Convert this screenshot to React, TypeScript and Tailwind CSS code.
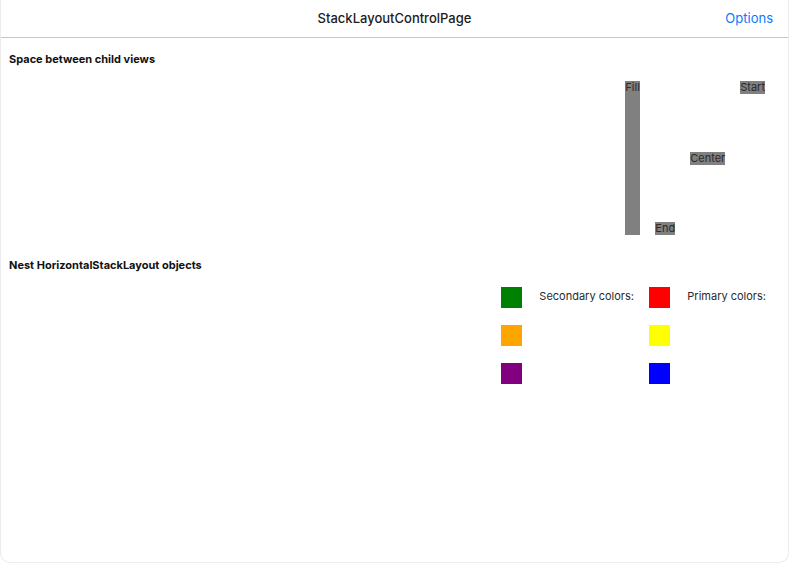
import React from 'react';

const Box: React.FC<{ label: string; className?: string }> = ({ label, className = '' }) => (
  <div className={`bg-[#808080] text-[#2a2a2a] text-[11px] leading-[13px] ${className}`}>
    {label}
  </div>
);

const Swatch: React.FC<{ color: string }> = ({ color }) => (
  <div className={`w-[21px] h-[21px] ${color}`} />
);

export default function App() {
  return (
    <div
      className="h-[563px] w-[789px] bg-white flex flex-col rounded-b-[10px] border-x border-b border-[#ececec] overflow-hidden"
      style={{ fontFamily: 'Inter, "Noto Sans", sans-serif' }}
    >
      <header className="h-[38px] shrink-0 border-b border-[#c6c6c6] flex items-center relative">
        <h1 className="absolute inset-x-0 text-center text-[13px] text-[#1c1c1c] font-medium">
          StackLayoutControlPage
        </h1>
        <a href="#" className="ml-auto mr-[15px] text-[13px] text-[#0a7aff] relative">
          Options
        </a>
      </header>

      <main className="px-[8px]">
        <h2 className="mt-[14px] text-[11px] font-bold text-[#111] leading-[14px]">
          Space between child views
        </h2>
        <div className="mt-[15px] h-[154px] flex justify-end items-stretch gap-[15px] pr-[15px]">
          <Box label="Fill" className="w-[15px]" />
          <div className="flex flex-col justify-end">
            <Box label="End" />
          </div>
          <div className="flex flex-col justify-center">
            <Box label="Center" />
          </div>
          <div className="flex flex-col justify-start">
            <Box label="Start" />
          </div>
        </div>

        <h2 className="mt-[23px] text-[11px] font-bold text-[#111] leading-[14px]">
          Nest HorizontalStackLayout objects
        </h2>
        <div className="mt-[15px] flex justify-end pr-[14px] gap-[17px]">
          <div className="flex flex-col gap-[17px]">
            <Swatch color="bg-[#008000]" />
            <Swatch color="bg-[#ffa500]" />
            <Swatch color="bg-[#800080]" />
          </div>
          <div className="text-[11px] text-[#2a2a2a] pt-[1px] w-[93px] whitespace-nowrap">
            Secondary colors:
          </div>
          <div className="flex flex-col gap-[17px]">
            <Swatch color="bg-[#ff0000]" />
            <Swatch color="bg-[#ffff00]" />
            <Swatch color="bg-[#0000ff]" />
          </div>
          <div className="text-[11px] text-[#2a2a2a] pt-[1px] whitespace-nowrap">Primary colors:</div>
        </div>
      </main>
    </div>
  );
}
